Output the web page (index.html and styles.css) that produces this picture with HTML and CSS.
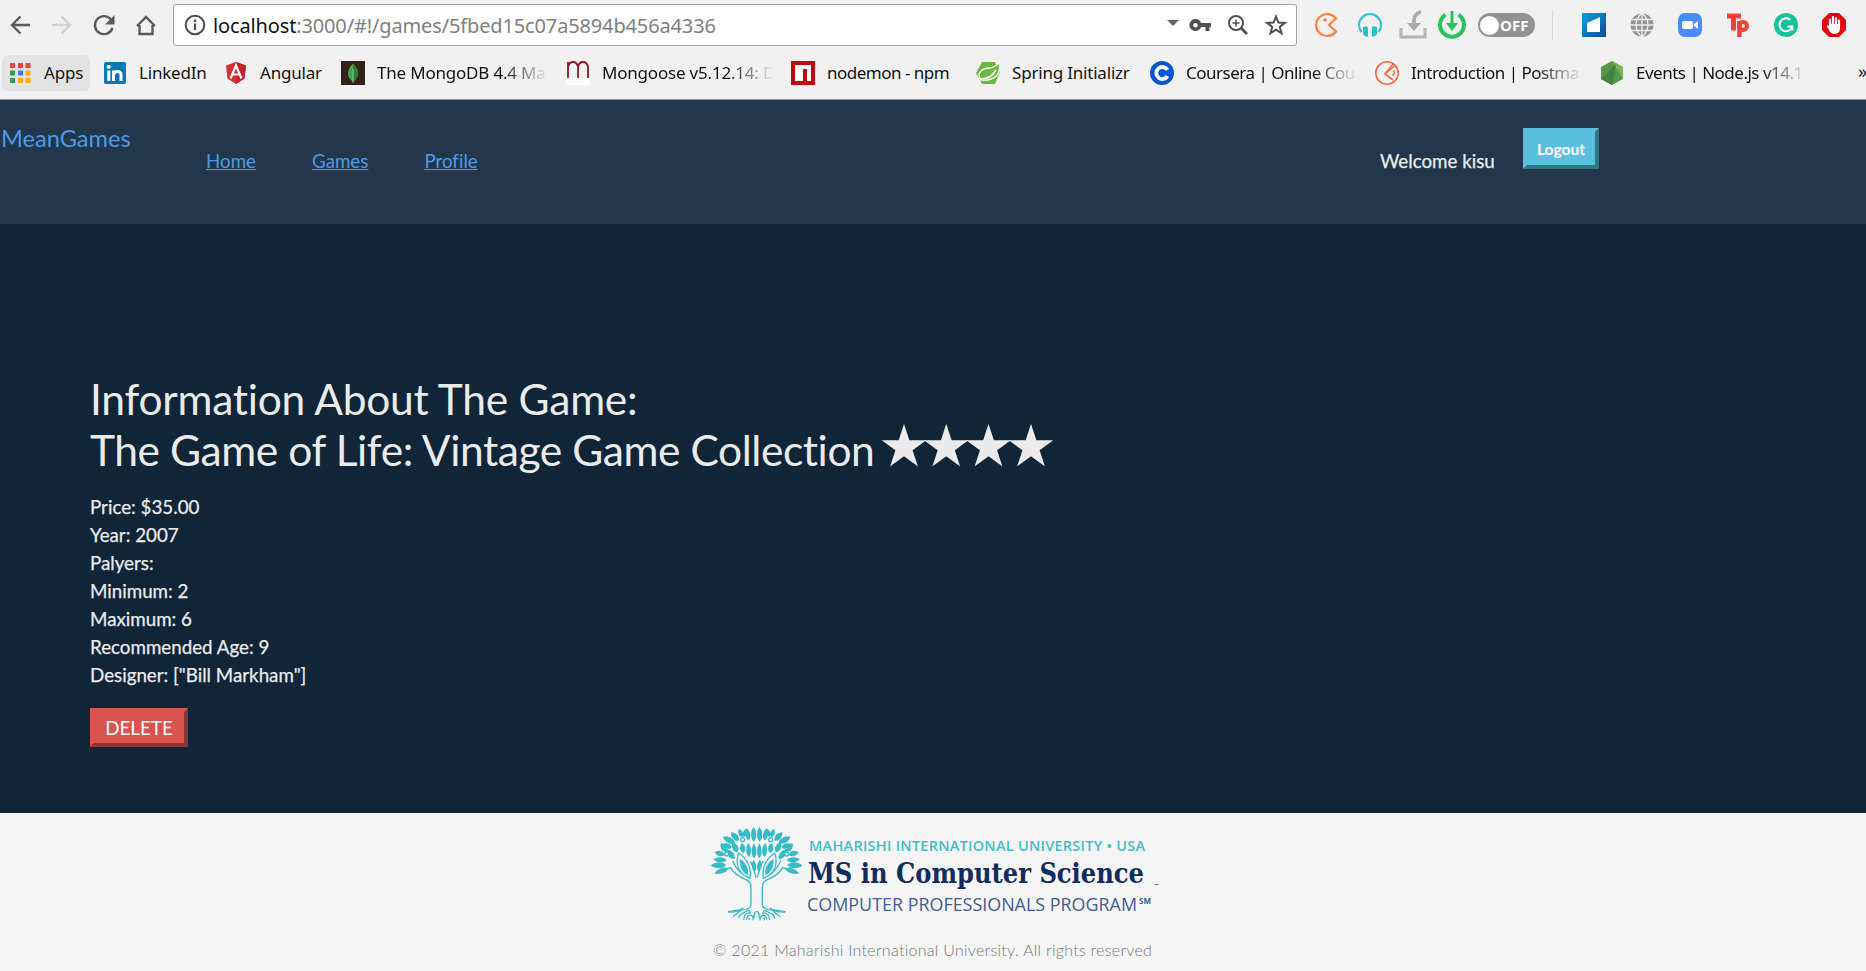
FILE: index.html
```html
<!DOCTYPE html>
<html lang="en">
<head>
<meta charset="utf-8">
<title>MeanGames</title>
<link rel="stylesheet" href="styles.css">
</head>
<body>
<div class="browser">
  <div class="toolbar">
    <div class="nav-buttons">
      <svg width="24" height="24" viewBox="0 0 24 24" class="stroke-dark"><path d="M22 12H4M12.500 3.500L4 12l8.500 8.500"/></svg>
      <svg width="24" height="24" viewBox="0 0 24 24" class="stroke-light"><path d="M2 12h18M11.500 3.500L20 12l-8.500 8.500"/></svg>
      <svg width="24" height="24" viewBox="0 0 24 24" class="stroke-dark"><path d="M19 6.500A9 9 0 1 0 20.500 15"/><path d="M22.500 2v9.500H13z" fill="#5a5a5a" stroke="none"/></svg>
      <svg width="24" height="24" viewBox="0 0 24 24" class="stroke-dark"><path d="M3 13L12 4l9 9M5.500 12v9h13v-9"/></svg>
    </div>
    <div class="address">
      <svg class="info" width="22" height="22" viewBox="0 0 22 22"><circle cx="11" cy="11" r="9.300" fill="none" stroke="#4d4d4d" stroke-width="2"/><path d="M11 9.500V16M11 5.500V8" stroke="#4d4d4d" stroke-width="2.200"/></svg>
      <span class="url"><b>localhost</b>:3000/#!/games/5fbed15c07a5894b456a4336</span>
      <div class="address-icons">
        <svg width="12" height="6" viewBox="0 0 12 6"><path d="M0 0h12L6 6z" fill="#666"/></svg>
        <svg width="22" height="14" viewBox="0 0 22 14"><path fill-rule="evenodd" fill="#505050" d="M6.500 1a6 6 0 0 1 5.600 4H22v4h-1.500v4h-4V9h-4.400A6 6 0 1 1 6.500 1zm0 4a2.300 2.300 0 1 0 0 4.600 2.300 2.300 0 0 0 0-4.600z"/></svg>
        <svg width="22" height="22" viewBox="0 0 22 22" fill="none" stroke="#505050" stroke-width="2"><circle cx="9" cy="9" r="7"/><path d="M9 5.500v7M5.500 9h7" stroke-width="1.500"/><path d="M14 14l6 6" stroke-width="2.800"/></svg>
        <svg width="22" height="22" viewBox="0 0 22 22" fill="none" stroke="#505050" stroke-width="2"><path d="M11 2.500l2.400 6 6.400.4-5 4 1.700 6.300-5.500-3.500-5.500 3.500 1.700-6.300-5-4 6.400-.4z"/></svg>
      </div>
    </div>
    <div class="extensions">
      <svg width="24" height="28" viewBox="0 0 24 28"><path d="M21 7.500A11 11 0 1 0 21 20.500L14 14z" fill="none" stroke="#fa8238" stroke-width="2.200" stroke-linejoin="round"/><circle cx="10" cy="9" r="1.800" fill="#fa8238"/></svg>
      <svg width="24" height="28" viewBox="0 0 24 28"><path d="M3.500 21A11 11 0 1 1 20.500 21" fill="none" stroke="#2bbfcf" stroke-width="2"/><path d="M5 16q5-2 5 1v9q-3 0-5-3zM19 16q-5-2-5 1v9q3 0 5-3z" fill="#2bbfcf"/></svg>
      <svg width="28" height="30" viewBox="0 0 28 30"><path d="M2 18v9h24v-9" fill="none" stroke="#b4b4b4" stroke-width="3"/><path d="M22 2q-8 1-7 13" fill="none" stroke="#a8a8a8" stroke-width="3.500"/><path d="M8 13h14l-7 8z" fill="#a8a8a8"/></svg>
      <svg width="30" height="30" viewBox="0 0 30 30"><path d="M8.500 4.700a12 12 0 1 0 13 0" fill="none" stroke="#28c45b" stroke-width="4"/><path d="M15 1v16" stroke="#28c45b" stroke-width="3"/><path d="M9 13h12l-6 8z" fill="#28c45b"/></svg>
      <span class="toggle"><i></i>OFF</span>
      <span class="divider"></span>
      <svg width="24" height="24" viewBox="0 0 24 24"><defs><linearGradient id="tile" x2="1" y2="1"><stop stop-color="#12a0e0"/><stop offset="1" stop-color="#064c98"/></linearGradient></defs><path d="M0 0h24v24H0z" fill="url(#tile)"/><path d="M5 10L18 4v15H5z" fill="#fff"/></svg>
      <svg width="24" height="24" viewBox="0 0 24 24"><circle cx="12" cy="12" r="11.500" fill="#949494"/><path d="M12 0v24M0 12h24M2 6.500h20M2 17.500h20M12 0C4 7 4 17 12 24M12 0c8 7 8 17 0 24" fill="none" stroke="#eee" stroke-width="1.300"/></svg>
      <svg width="24" height="24" viewBox="0 0 24 24"><rect width="24" height="24" rx="7" fill="#4a8cff"/><rect x="4" y="8" width="11" height="8" rx="2" fill="#fff"/><path d="M16 11l4-3v8l-4-3z" fill="#fff"/></svg>
      <svg width="24" height="26" viewBox="0 0 24 26"><path d="M1 4h14M7.500 4v14.500" fill="none" stroke="#ef4136" stroke-width="5"/><path d="M13.500 25V9" stroke="#ef4136" stroke-width="4.500"/><circle cx="17" cy="14" r="4" fill="none" stroke="#ef4136" stroke-width="4"/></svg>
      <svg width="24" height="24" viewBox="0 0 24 24"><circle cx="12" cy="12" r="12" fill="#15c39a"/><path d="M16.500 7A6.500 6.500 0 1 0 18.300 13.500H13.500M18.300 13v4.500" fill="none" stroke="#fff" stroke-width="2"/></svg>
      <svg width="24" height="24" viewBox="0 0 24 24"><path d="M7 0h10l7 7v10l-7 7H7l-7-7V7z" fill="#e1090f"/><path d="M8 13V6.500M11 12V4M14 12V5M17 13V7.500" stroke="#fff" stroke-width="2.200" stroke-linecap="round"/><path d="M7 11h11v4q0 6-6 6-3 0-5-4l-2.500-4q1-1.500 2.500 0z" fill="#fff"/></svg>
    </div>
  </div>
  <div class="bookmarks">
    <div class="bookmark apps">
      <svg width="24" height="24" viewBox="0 0 24 24"><path d="M2 2h5v5H2zM10 2h5v5h-5zM17.500 2h5v5h-5z" fill="#e8433f"/><path d="M2 9.500h5v5H2zM2 17h5v5H2z" fill="#369b58"/><path d="M10 9.500h5v5h-5z" fill="#3b83f2"/><path d="M17.500 9.500h5v5h-5zM10 17h5v5h-5zM17.500 17h5v5h-5z" fill="#f7ad15"/></svg>
      <span>Apps</span>
    </div>
    <div class="bookmark">
      <svg width="24" height="24" viewBox="0 0 24 24"><rect x="1" y="1" width="22" height="22" rx="2" fill="#0b79b8"/><path d="M5.800 9.500V20M10.500 20V9.500M10.500 14q0-3.500 3.800-3.500T18 14v6" fill="none" stroke="#fff" stroke-width="3"/><circle cx="5.800" cy="5.800" r="2" fill="#fff"/></svg>
      <span>LinkedIn</span>
    </div>
    <div class="bookmark">
      <svg width="24" height="24" viewBox="0 0 24 24"><path d="M12 1l10 3.500-1.500 13L12 23l-8.500-5.500L2 4.500z" fill="#dd2c35"/><path d="M12 1l10 3.500-1.500 13L12 23z" fill="#c3242f"/><path d="M6.500 17.500L12 4.500l5.500 13M8.500 13.500h7" fill="none" stroke="#fff" stroke-width="2.200"/></svg>
      <span>Angular</span>
    </div>
    <div class="bookmark fade">
      <svg width="24" height="24" viewBox="0 0 24 24"><path d="M0 0h24v24H0z" fill="#34211a"/><path d="M12 2.500q-5 5-5 10t5 8q5-3 5-8t-5-10z" fill="#41a247"/><path d="M12 2.500q5 5 5 10t-5 8z" fill="#28803a"/><path d="M12 8v14" stroke="#9dc58c"/></svg>
      <span>The MongoDB 4.4 Ma</span>
    </div>
    <div class="bookmark fade">
      <svg width="24" height="24" viewBox="0 0 24 24"><path d="M0 17h24v7H0z" fill="#fff"/><path d="M2 17V1M2 6q1-5 5-5t5 5v11M12 6q1-5 5-5t5 5v11" fill="none" stroke="#8a1820" stroke-width="1.800"/></svg>
      <span>Mongoose v5.12.14: D</span>
    </div>
    <div class="bookmark snug">
      <svg width="24" height="24" viewBox="0 0 24 24"><path d="M0 0h24v24H0z" fill="#bd0b10"/><path d="M4 4h16v16h-4V8h-4v12H4z" fill="#fff"/></svg>
      <span>nodemon - npm</span>
    </div>
    <div class="bookmark">
      <svg width="24" height="24" viewBox="0 0 24 24"><path d="M6 1h13l5 10-5 12H6L0 12z" fill="#6cb644"/><path d="M23 1q2 11-4 15-5 4-14 3Q1 14 5 10q3-3 9-3 6-1 9-6z" fill="#6cb644" stroke="#fff" stroke-width="1.300"/><path d="M5 18q10 0 15-9" fill="none" stroke="#fff" stroke-width="1.700"/></svg>
      <span>Spring Initializr</span>
    </div>
    <div class="bookmark fade snug">
      <svg width="24" height="24" viewBox="0 0 24 24"><circle cx="12" cy="12" r="12" fill="#0555d4"/><path d="M17.500 9A6 6 0 1 0 17.500 15" fill="none" stroke="#fff" stroke-width="3.800"/></svg>
      <span>Coursera | Online Cou</span>
    </div>
    <div class="bookmark fade snug">
      <svg width="24" height="24" viewBox="0 0 24 24" fill="none" stroke="#ef6a45" stroke-width="1.600"><circle cx="12" cy="12" r="11.200"/><path d="M20 4.500L10 13l8 6M10 13l8-10M18.500 9.500q2 3-1 5"/></svg>
      <span>Introduction | Postma</span>
    </div>
    <div class="bookmark fade snug">
      <svg width="24" height="24" viewBox="0 0 24 24"><path d="M12 0l11 6v12l-11 6-11-6V6z" fill="#57974b"/><path d="M12 0l11 6v12z" fill="#76b35c"/><path d="M1 18L16 3 12 24z" fill="#438340"/></svg>
      <span>Events | Node.js v14.1</span>
    </div>
    <div class="overflow">»</div>
  </div>
</div>

<header class="site-nav">
  <a class="brand">MeanGames</a>
  <nav class="links"><a>Home</a><a>Games</a><a>Profile</a></nav>
  <div class="account"><span>Welcome kisu</span><button class="btn logout">Logout</button></div>
</header>

<main class="game">
  <h1>Information About The Game:<br><span class="title">The Game of Life: Vintage Game Collection</span> <span class="stars">★★★★</span></h1>
  <ul>
    <li>Price: $35.00</li>
    <li>Year: 2007</li>
    <li>Palyers:</li>
    <li>Minimum: 2</li>
    <li>Maximum: 6</li>
    <li>Recommended Age: 9</li>
    <li>Designer: ["Bill Markham"]</li>
  </ul>
  <button class="btn delete">DELETE</button>
</main>

<footer class="footer">
  <svg class="logo" width="448" height="100" viewBox="0 0 448 100">
    <defs>
      <path id="leaf" d="M0 0C-14-9-12-27 0-38 12-27 14-9 0 0z"/>
      <g id="half">
        <g fill="#35bcc6">
          <use href="#leaf" transform="translate(161 80) scale(.8 1.150)"/>
          <use href="#leaf" transform="translate(146 76) rotate(-8) scale(.75 .95)"/>
          <use href="#leaf" transform="translate(127 67) rotate(-22) scale(.7)"/>
          <use href="#leaf" transform="translate(131 66) rotate(18) scale(.6 .7)"/>
          <use href="#leaf" transform="translate(116 77) rotate(-42) scale(.9)"/>
          <use href="#leaf" transform="translate(104 84) rotate(-62) scale(.9 1.050)"/>
          <use href="#leaf" transform="translate(95 98) rotate(-70) scale(.8)"/>
          <use href="#leaf" transform="translate(78 110) rotate(-30) scale(.8)"/>
          <use href="#leaf" transform="translate(74 119) rotate(-76) scale(.8)"/>
          <use href="#leaf" transform="translate(80 135) rotate(-88) scale(.8 1.050)"/>
          <use href="#leaf" transform="translate(78 150) rotate(-92) scale(.9 1.200)"/>
          <use href="#leaf" transform="translate(86 160) rotate(-110) scale(.8 1.200)"/>
          <use href="#leaf" transform="translate(104 132) rotate(-42) scale(.9 1.050)"/>
          <use href="#leaf" transform="translate(112 112) rotate(-24) scale(.9)"/>
          <use href="#leaf" transform="translate(130 114) rotate(-8) scale(.8)"/>
          <use href="#leaf" transform="translate(147 126) rotate(-3) scale(.75 1.100)"/>
          <use href="#leaf" transform="translate(162 130) scale(.7 1.200)"/>
          <use href="#leaf" transform="translate(164 170) rotate(-6) scale(.65 .95)"/>
          <use href="#leaf" transform="translate(143 180) rotate(-26) scale(.9 1.400)"/>
        </g>
        <g fill="none" stroke="#35bcc6" stroke-width="4">
          <circle cx="128" cy="74" r="6" fill="#f5f5f5"/><circle cx="80" cy="117" r="6" fill="#f5f5f5"/>
          <path d="M150 190C112 174 106 144 116 114 142 132 155 156 150 190z"/>
          <path d="M62 171Q80 160 92 158 105 181 136 193 153 199 153 218V264Q154 280 138 284 116 284 84 290"/>
          <path d="M151 139Q160 155 168 188M98 137Q108 161 124 174"/>
          <path d="M84 291Q112 293 130 279 105 302 99 305M116 310Q119 296 134 292 150 281 151 294 133 292 131 315M139 314Q144 297 154 301 162 306 159 316M162 309Q162 288 170 290M147 316V308"/>
        </g>
      </g>
    </defs>
    <g transform="translate(-11 0) scale(.3333)"><use href="#half"/><use href="#half" transform="matrix(-1 0 0 1 340 0)"/></g>
    <text class="logo-univ" x="98" y="36" textLength="336">MAHARISHI INTERNATIONAL UNIVERSITY • USA</text>
    <text class="logo-ms" x="97" y="68" textLength="336" lengthAdjust="spacingAndGlyphs">MS in Computer Science</text>
    <text class="logo-prog" x="96" y="96" textLength="330" lengthAdjust="spacingAndGlyphs">COMPUTER PROFESSIONALS PROGRAM</text>
    <text class="logo-sm" x="428" y="89" textLength="12" lengthAdjust="spacingAndGlyphs">SM</text>
    <path d="M443.500 69.500h4" stroke="#777"/>
  </svg>
  <p>© 2021 Maharishi International University. All rights reserved</p>
</footer>
</body>
</html>
```
FILE: styles.css
```css
* { box-sizing: border-box; }
body { margin: 0; height: 971px; display: flex; flex-direction: column; overflow: hidden; font-family: Lato, "Liberation Sans", sans-serif; font-size: 18.75px; font-variant-ligatures: none; background: #102538; color: #ebebeb; }
svg { display: block; flex: none; }

.browser { flex: none; height: 100px; background: #f1f1f1; border-bottom: 1px solid #8c999e; font-family: "Noto Sans", "Open Sans", sans-serif; color: #111; }
.toolbar { display: flex; height: 50px; padding-top: 4px; }
.toolbar > * { flex: none; }
.nav-buttons { display: flex; gap: 18px; width: 173px; padding: 9px 0 0 8px; }
.stroke-dark, .stroke-light { fill: none; stroke: #5a5a5a; stroke-width: 2.4; }
.stroke-light { stroke: #d2d2d2; }
.address { display: flex; align-items: center; width: 1124px; height: 42px; padding: 0 9px 0 10px; background: #fff; border: 1px solid #a4a4a4; border-radius: 3px; }
.url { margin-left: 7px; flex: 1; font-size: 20px; letter-spacing: -0.14px; color: #808080; white-space: nowrap; }
.url b { font-weight: 400; color: #111; }
.address-icons { display: flex; align-items: center; }
.address-icons svg:nth-child(1) { margin: 0 10px 5px 0; }
.address-icons svg:nth-child(2) { margin-right: 16px; }
.address-icons svg:nth-child(3) { margin-right: 16px; }
.extensions { display: flex; align-items: center; height: 42px; padding-left: 18px; }
.extensions svg:nth-child(1) { margin-right: 19px; }
.extensions svg:nth-child(2) { margin-right: 17px; }
.extensions svg:nth-child(3) { margin-right: 10px; }
.extensions svg:nth-child(4) { margin-right: 11px; }
.extensions svg:nth-child(n+7):not(:last-child) { margin-right: 24px; }
.toggle { display: flex; align-items: center; width: 57px; height: 24px; padding-left: 2px; gap: 1px; border-radius: 12px; background: #929292; color: #fff; font: 700 15px "Open Sans", sans-serif; }
.toggle i { width: 19px; height: 19px; border-radius: 50%; background: #fff; }
.divider { width: 1px; height: 30px; margin: 0 29px 0 17px; background: #d8d8d8; }

.bookmarks { display: grid; grid-template-columns: 101px 121px 117px 225px 225px 185px 174px 225px 225px 258px auto; padding: 5px 0 0 2px; overflow: hidden; }
.bookmark { display: flex; align-items: center; height: 36px; font-size: 17px; white-space: nowrap; }
.bookmark span { margin: -2px 0 0 12px; letter-spacing: -0.2px; }
.bookmark.snug span { letter-spacing: -0.5px; }
.apps { width: 88px; padding-left: 6px; border-radius: 6px; background: #e3e3e3; }
.fade span { width: 174px; -webkit-mask-image: linear-gradient(90deg, #000 125px, transparent 172px); mask-image: linear-gradient(90deg, #000 125px, transparent 172px); }
.overflow { font-size: 18px; line-height: 33px; }

.site-nav { flex: none; display: flex; height: 124px; background: #22374c; color: #ebebeb; }
.brand { width: 206px; padding: 24px 0 0 1px; font-size: 23.6px; line-height: 28px; color: #4e9ae4; }
.links { display: flex; gap: 56px; width: 1174px; padding-top: 47px; line-height: 28px; color: #4e9ae4; }
.links a { text-decoration: underline; text-decoration-thickness: 1px; }
.account { display: flex; align-items: flex-start; }
.account span { width: 143px; padding-top: 47px; line-height: 28px; -webkit-text-stroke: 0.25px; }
.btn { display: block; padding: 0; border: 4px solid; color: #fff; font-family: Lato, sans-serif; }
.logout { width: 76px; height: 41px; margin-top: 28px; background: #5bc0de; border-color: #5bc0de #387584 #387584 #5bc0de; font-size: 15.6px; font-weight: 700; }

.game { flex: none; height: 589px; padding: 149px 0 0 90px; }
h1 { margin: 0; font-size: 42.5px; font-weight: 400; line-height: 51px; letter-spacing: -0.25px; white-space: nowrap; }
.title { letter-spacing: -0.42px; }
.stars { margin-left: -7px; font-family: "DejaVu Sans", sans-serif; font-size: 58px; line-height: 1px; letter-spacing: -9.7px; }
ul { margin: 18px 0 0; padding: 0; list-style: none; line-height: 28px; -webkit-text-stroke: 0.25px; }
.delete { width: 98px; height: 39px; margin-top: 19px; background: #d9534f; border-color: #d9534f #893835 #893835 #d9534f; font-size: 18.75px; }

.footer { flex: 1; display: flex; flex-direction: column; align-items: flex-start; background: #f5f5f5; }
.logo { margin: 2px 0 0 711px; overflow: visible; }
.logo-univ { font: 600 14.5px "Open Sans", sans-serif; fill: #43bec8; }
.logo-ms { font: 700 28px "DejaVu Serif", serif; fill: #122c5c; }
.logo-prog { font: 500 18.5px "Open Sans", sans-serif; fill: #445d93; }
.logo-sm { font: 700 8px "Open Sans", sans-serif; fill: #445d93; }
.footer p { margin: 23px 0 0 713px; font-size: 16px; font-weight: 300; line-height: 24px; letter-spacing: 0.28px; color: #777; white-space: nowrap; }
```
